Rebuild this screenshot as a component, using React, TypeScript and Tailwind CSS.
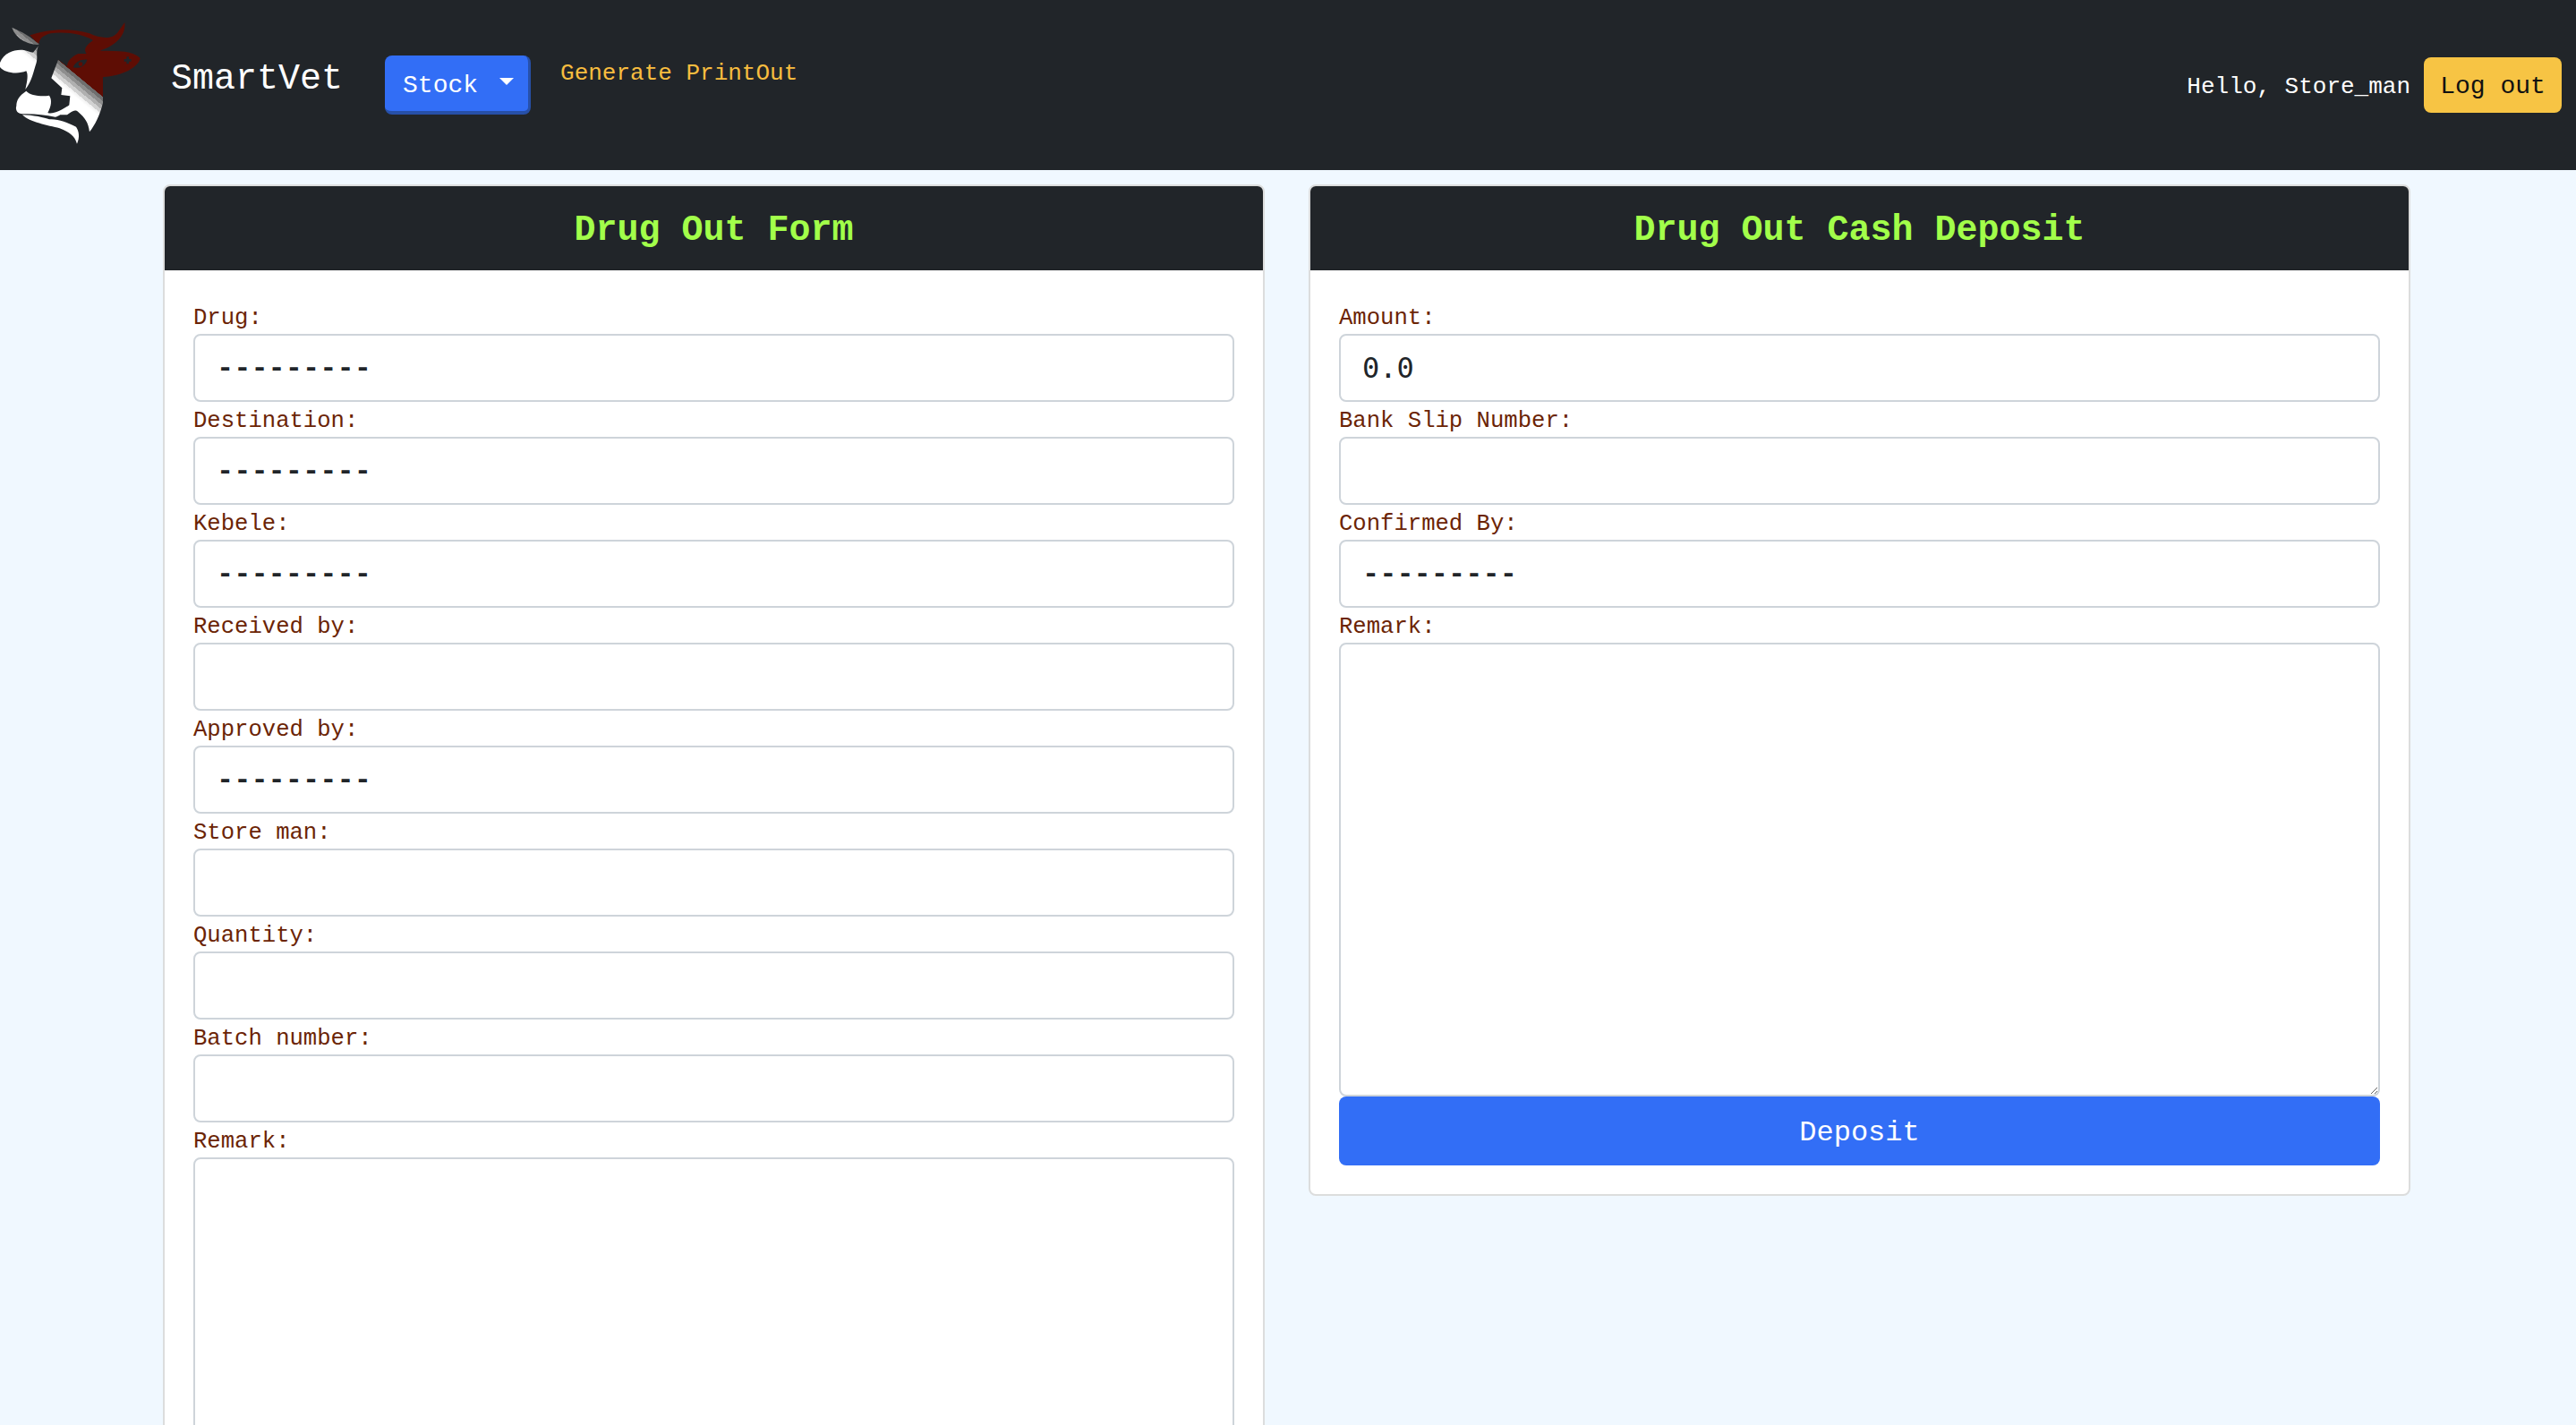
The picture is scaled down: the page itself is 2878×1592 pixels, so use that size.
import React from "react";

const leftFields = [
  { label: "Drug:", kind: "select" },
  { label: "Destination:", kind: "select" },
  { label: "Kebele:", kind: "select" },
  { label: "Received by:", kind: "input" },
  { label: "Approved by:", kind: "select" },
  { label: "Store man:", kind: "input" },
  { label: "Quantity:", kind: "input" },
  { label: "Batch number:", kind: "input" },
];

const rightFields = [
  { label: "Amount:", kind: "input", value: "0.0" },
  { label: "Bank Slip Number:", kind: "input" },
  { label: "Confirmed By:", kind: "select" },
];

const controlClass =
  "block w-full h-[76px] rounded-lg border-2 border-[#ced4da] bg-white px-6 text-[32px] text-[#212529] font-['DejaVu_Sans_Mono',monospace] outline-none";

const labelClass = "block h-[39px] text-[25.6px] leading-[44px] text-[#6b2405]";

const Logo = () => (
  <svg width="160" height="170" viewBox="0 0 480 510" className="mb-[20px] shrink-0">
    <defs>
      <linearGradient id="cowFill" gradientUnits="userSpaceOnUse" x1="270" y1="262" x2="232" y2="308">
        <stop offset="0" stopColor="#5e0d04" />
        <stop offset="0.02" stopColor="#6f6f6f" />
        <stop offset="0.2" stopColor="#6f6f6f" />
        <stop offset="0.2" stopColor="#8e8e8e" />
        <stop offset="0.4" stopColor="#8e8e8e" />
        <stop offset="0.4" stopColor="#b0b0b0" />
        <stop offset="0.6" stopColor="#b0b0b0" />
        <stop offset="0.6" stopColor="#d2d2d2" />
        <stop offset="0.8" stopColor="#d2d2d2" />
        <stop offset="0.8" stopColor="#f0f0f0" />
        <stop offset="1" stopColor="#ffffff" />
      </linearGradient>
    </defs>
    <g fill="url(#cowFill)">
      <path d="M100,118 C150,100 230,90 300,112 C335,128 375,135 395,108 L418,75 C422,115 395,150 335,170 C400,170 445,170 470,195 C465,225 410,255 345,258 L345,345 C335,385 318,420 300,442 C296,410 285,395 262,375 C250,365 240,375 225,385 L195,385 L232,352 L235,322 L205,318 L208,295 L172,262 L195,200 L225,222 C225,205 240,190 262,180 L290,180 C278,165 290,150 312,135 C280,115 220,105 170,112 C145,118 130,130 130,150 Z" />
      <path d="M40,92 C70,105 110,125 130,150 C100,150 55,135 40,92 Z" />
      <path d="M0,210 C15,175 50,165 80,168 C95,170 105,178 112,175 L130,152 C118,175 128,190 122,210 C112,240 108,270 85,300 C92,270 95,250 88,238 C60,250 15,245 0,225 Z" />
      <path d="M88,305 C100,320 140,325 165,320 C175,335 172,355 160,378 C175,385 205,370 228,355 C210,380 195,392 185,392 C150,385 110,380 75,382 C60,382 50,370 55,355 C55,335 65,320 88,305 Z" />
      <path d="M75,385 C110,385 150,395 165,400 C195,398 225,410 255,425 C265,440 268,460 258,482 C250,455 235,445 200,430 C160,420 100,410 75,385 Z" />
    </g>
    <path d="M245,226 C252,208 272,198 292,200 C288,218 268,232 245,226 Z" fill="#212529" />
    <circle cx="270" cy="215" r="7" fill="#5e0d04" />
    <path d="M424,190 h8 v8 h8 v8 h-8 v8 h-8 v-8 h-8 v-8 h8 Z" fill="#212529" />
  </svg>
);

const Field = ({ field }: { field: { label: string; kind: string; value?: string } }) => (
  <div>
    <label className={labelClass}>{field.label}</label>
    {field.kind === "select" ? (
      <select className={`${controlClass} appearance-none pt-[2px] font-['Liberation_Mono',monospace] font-bold`} defaultValue="">
        <option value="">---------</option>
      </select>
    ) : (
      <input className={controlClass} defaultValue={field.value} />
    )}
  </div>
);

const Card = ({ title, children }: { title: string; children: React.ReactNode }) => (
  <div className="w-[1231px] self-start rounded-lg border-2 border-[#dcdddd] bg-white">
    <div className="flex h-[94px] items-center justify-center rounded-t-md bg-[#212529] pt-[5px] text-[40px] font-bold text-[#a2ff4a]">
      {title}
    </div>
    <div className="p-8">{children}</div>
  </div>
);

const App = () => {
  return (
    <div className="h-[1592px] overflow-hidden bg-[#f0f8ff] font-['Liberation_Mono','Courier_New',monospace]">
      <nav className="flex h-[190px] items-center bg-[#212529] pr-4">
        <Logo />
        <a className="mb-[13px] ml-[31px] text-[40px] text-white">SmartVet</a>
        <button className="ml-[47px] flex h-[66px] w-[163px] items-center rounded-lg border-r-[3px] border-b-[4px] border-[#2750a8] bg-[#326ef6] pt-[5px] pl-[20px] text-[28px] text-white">
          Stock
          <span className="mb-[10px] ml-[24px] h-0 w-0 border-x-[8px] border-t-[8px] border-x-transparent border-t-white" />
        </button>
        <a className="mb-[26px] ml-[33px] text-[26px] text-[#f8bd3f]">Generate PrintOut</a>
        <span className="mt-[4px] ml-auto text-[26px] text-white">Hello, Store_man</span>
        <button className="ml-[15px] h-[62px] w-[154px] rounded-lg bg-[#f7c444] pt-[3px] text-[28px] text-[#111111]">
          Log out
        </button>
      </nav>

      <main className="flex gap-[49px] pt-4 pl-[182px]">
        <Card title="Drug Out Form">
          {leftFields.map((field) => (
            <Field key={field.label} field={field} />
          ))}
          <label className={labelClass}>Remark:</label>
          <textarea className="block h-[507px] w-full resize-y rounded-lg border-2 border-[#ced4da] bg-white px-6 py-3 text-[32px] outline-none" />
        </Card>

        <Card title="Drug Out Cash Deposit">
          {rightFields.map((field) => (
            <Field key={field.label} field={field} />
          ))}
          <label className={labelClass}>Remark:</label>
          <textarea className="block h-[507px] w-full resize-y rounded-lg border-2 border-[#ced4da] bg-white px-6 py-3 text-[32px] outline-none" />
          <button className="block h-[77px] w-full rounded-lg bg-[#326ef6] pt-[4px] text-[32px] text-white">Deposit</button>
        </Card>
      </main>
    </div>
  );
};

export default App;
